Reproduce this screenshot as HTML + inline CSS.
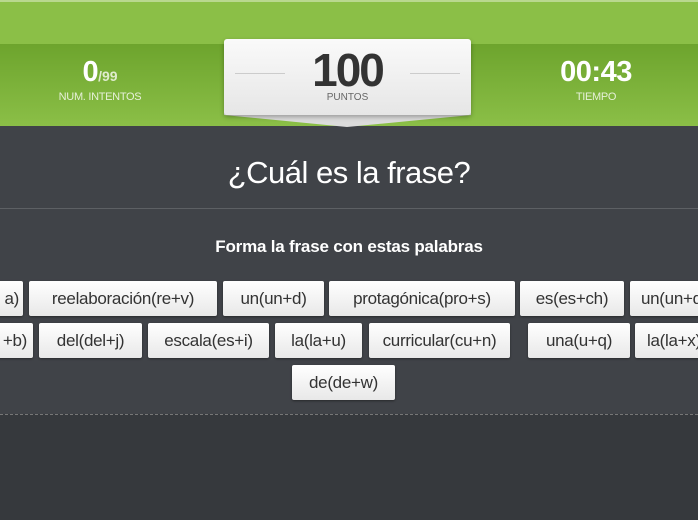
<!DOCTYPE html>
<html><head><meta charset="utf-8"><style>
*{margin:0;padding:0;box-sizing:border-box}
body{width:698px;height:520px;overflow:hidden;background:#404348;font-family:"Liberation Sans",sans-serif;position:relative}
.top{position:absolute;left:0;top:0;width:698px;height:44px;background:#8bbf47;border-top:2px solid #b9d88f}
.band{position:absolute;left:0;top:44px;width:698px;height:82px;background:linear-gradient(#6da42d,#8bbf47)}
.stat{position:absolute;color:#fff;text-align:center}
.big{font-weight:bold;font-size:29px;letter-spacing:-0.5px}
.lbl{font-size:11px;color:#e6f0d8;margin-top:2px;letter-spacing:-0.3px}
.score{position:absolute;left:224px;top:39px;width:247px;height:76px;background:linear-gradient(#fafafa,#e6e6e6);border-radius:3px;box-shadow:0 2px 5px rgba(0,0,0,.3);text-align:center}
.tip{position:absolute;left:224px;top:112px;width:247px;height:15px}
.score .n{font-weight:bold;font-size:46px;color:#333;line-height:1;margin-top:8px;letter-spacing:-2px}
.score .p{font-size:10px;color:#666;margin-top:-1px}
.line{position:absolute;top:34px;width:50px;height:1px;background:#ccc}
h1{position:absolute;top:155px;left:0;width:698px;text-align:center;color:#fff;font-weight:normal;font-size:31px;letter-spacing:-0.5px}
.hr{position:absolute;top:208px;left:0;width:698px;height:1px;background:#5d6064}
h2{position:absolute;top:237px;left:0;width:698px;text-align:center;color:#fff;font-size:17px;letter-spacing:-0.2px}
.b{position:absolute;height:35px;background:linear-gradient(#fff,#e8e8e8);border-radius:2px;color:#333;font-size:17px;line-height:35px;text-align:center;white-space:nowrap;overflow:hidden;box-shadow:0 1px 2px rgba(0,0,0,.4);letter-spacing:-0.3px}
.low{position:absolute;top:414px;left:0;width:698px;height:106px;background:#36393d;border-top:1px dashed #777}
</style></head><body>
<div class="top"></div><div class="band"></div>
<div class="stat" style="left:40px;top:56px;width:120px"><span class="big">0</span><span style="font-weight:bold;font-size:14px;color:#dfeccd">/99</span><div class="lbl">NUM. INTENTOS</div></div>
<div class="stat" style="left:536px;top:56px;width:120px"><span class="big">00:43</span><div class="lbl">TIEMPO</div></div>
<svg class="tip" viewBox="0 0 247 15" preserveAspectRatio="none"><polygon points="0,0 247,0 247,3 123,15 0,3" fill="#dcdcdc"/></svg>
<div class="score"><div class="line" style="left:11px"></div><div class="line" style="right:11px"></div><div class="n">100</div><div class="p">PUNTOS</div></div>
<h1>¿Cuál es la frase?</h1>
<div class="hr"></div>
<h2>Forma la frase con estas palabras</h2>
<div class="b" style="left:-60px;top:281px;width:83px;text-align:right;padding-right:4px">a)</div>
<div class="b" style="left:29px;top:281px;width:188px">reelaboración(re+v)</div>
<div class="b" style="left:223px;top:281px;width:101px">un(un+d)</div>
<div class="b" style="left:329px;top:281px;width:186px">protagónica(pro+s)</div>
<div class="b" style="left:520px;top:281px;width:104px">es(es+ch)</div>
<div class="b" style="left:630px;top:281px;width:100px;text-align:left;padding-left:11px">un(un+d)</div>
<div class="b" style="left:-60px;top:323px;width:93px;text-align:right;padding-right:6px">+b)</div>
<div class="b" style="left:39px;top:323px;width:103px">del(del+j)</div>
<div class="b" style="left:148px;top:323px;width:121px">escala(es+i)</div>
<div class="b" style="left:275px;top:323px;width:87px">la(la+u)</div>
<div class="b" style="left:369px;top:323px;width:141px">curricular(cu+n)</div>
<div class="b" style="left:528px;top:323px;width:102px">una(u+q)</div>
<div class="b" style="left:635px;top:323px;width:100px;text-align:left;padding-left:12px">la(la+x)</div>
<div class="b" style="left:292px;top:365px;width:103px">de(de+w)</div>
<div class="low"></div>
</body></html>
